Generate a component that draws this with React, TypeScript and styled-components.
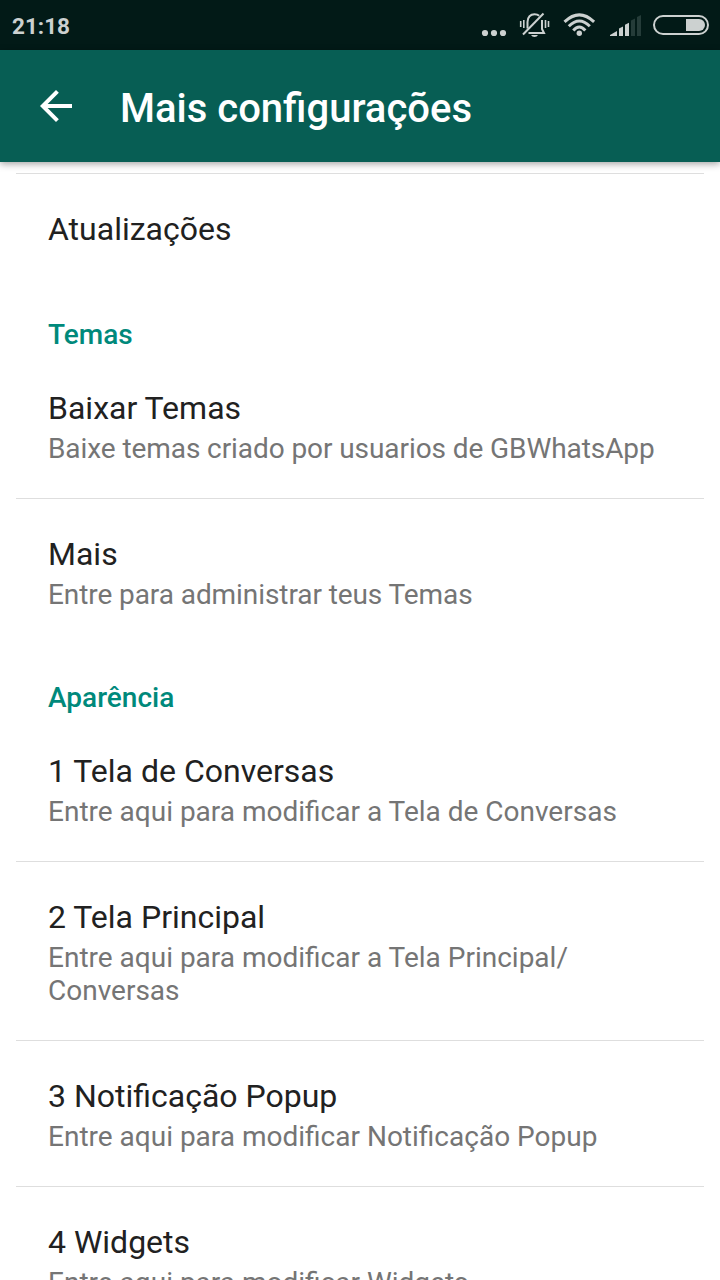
import React from "react";
import styled, { createGlobalStyle } from "styled-components";

const Global = createGlobalStyle`
  *{box-sizing:border-box}
  body{margin:0;background:#fff;font-family:Roboto,sans-serif;overflow:hidden}
`;
const Screen = styled.div`
  width: 720px;
  height: 1280px;
  overflow: hidden;
  background: #fff;
  display: flex;
  flex-direction: column;
`;
const StatusBar = styled.div`
  height: 50px;
  flex: none;
  background: #021a17;
  display: flex;
  align-items: flex-start;
  justify-content: space-between;
  padding-left: 12px;
  color: #ccd1d0;
`;
const Clock = styled.span`
  margin-top: 13px;
  font-size: 22.5px;
  line-height: 26px;
  font-weight: 700;
`;
const StatusIcons = styled.svg`
  display: block;
`;
const AppBar = styled.header`
  height: 112px;
  flex: none;
  background: #075e54;
  display: flex;
  align-items: center;
  padding-left: 32px;
  position: relative;
  box-shadow: 0 2px 7px rgba(0, 0, 0, 0.36);
`;
const Title = styled.h1`
  margin: 6px 0 0 40px;
  font-size: 40px;
  line-height: 48px;
  font-weight: 500;
  color: #fff;
`;
const List = styled.main`
  flex: 1;
  min-height: 0;
  overflow: hidden;
  padding: 11px 16px 0;
`;
const Item = styled.section<{ $divider?: boolean }>`
  border-top: ${p => (p.$divider ? "1px solid #dedede" : "0")};
  padding: ${p => (p.$divider ? "36px" : "38px")} 32px 33px;
`;
const ItemTitle = styled.div`
  font-size: 32px;
  line-height: 38px;
  color: #212121;
  white-space: nowrap;
`;
const Summary = styled.div<{ $tight?: boolean }>`
  margin-top: 5px;
  font-size: 28px;
  line-height: 33px;
  letter-spacing: ${p => (p.$tight ? "-0.08px" : "normal")};
  color: #757575;
  white-space: pre-line;
`;
const Heading = styled.h2`
  margin: 0;
  padding: 37px 32px 0;
  font-size: 28px;
  line-height: 33px;
  font-weight: 500;
  color: #00897b;
`;

export default function App() {
  return (
    <Screen>
      <Global />
      <StatusBar>
        <Clock>21:18</Clock>
        <StatusIcons width="250" height="50" viewBox="470 0 250 50" fill="#ccd1d0">
          <circle cx="485" cy="33" r="3.1" />
          <circle cx="494" cy="33" r="3.1" />
          <circle cx="503" cy="33" r="3.1" />

          <g fill="none" stroke="#ccd1d0" strokeWidth="2">
            <path d="M520.7 21v6M523.8 20v8M545.5 20v8M548.5 21v6" strokeWidth="1.6" />
            <path d="M527.5 28.5V22C527.5 17 530.5 14.2 534.5 14.2C536.5 14.2 538 14.7 539.2 15.8M542 20V29L544 33H528.5" />
            <path d="M523 34.5L543.5 13.5" />
          </g>
          <path d="M531 35h7q-1 2-3.5 2t-3.5-2z" />

          <g fill="none" stroke="#ccd1d0" strokeWidth="3">
            <path d="M564.5 21.8Q579.3 7.8 594.1 21.8" />
            <path d="M568.8 26.2Q579.3 15.8 589.8 26.2" />
            <path d="M573.3 30.5Q579.3 23.5 585.3 30.5" />
          </g>
          <circle cx="579.3" cy="33.2" r="2.7" />

          <path d="M610 36v-1l7-4v5zM619 36v-7.500l4-2v9.500zM625 36V24.800l4-2V36z" />
          <path fill="#253c39" d="M631 36V20.500l4-2V36zM637 36V17l4-2V36z" />

          <rect x="654" y="16" width="54" height="18" rx="9" fill="none" stroke="#ccd1d0" strokeWidth="2" />
          <path d="M686 19h13a6 6 0 0 1 0 12h-13z" />
        </StatusIcons>
      </StatusBar>
      <AppBar>
        <svg width="48" height="48" viewBox="0 0 24 24"><path fill="#fff" d="M20 11H7.83l5.59-5.59L12 4l-8 8 8 8 1.41-1.41L7.83 13H20v-2z" /></svg>
        <Title>Mais configurações</Title>
      </AppBar>
      <List>
        <Item $divider><ItemTitle>Atualizações</ItemTitle></Item>
        <Heading>Temas</Heading>
        <Item><ItemTitle>Baixar Temas</ItemTitle><Summary $tight>Baixe temas criado por usuarios de GBWhatsApp</Summary></Item>
        <Item $divider><ItemTitle>Mais</ItemTitle><Summary $tight>Entre para administrar teus Temas</Summary></Item>
        <Heading>Aparência</Heading>
        <Item><ItemTitle>1 Tela de Conversas</ItemTitle><Summary>Entre aqui para modificar a Tela de Conversas</Summary></Item>
        <Item $divider><ItemTitle>2 Tela Principal</ItemTitle><Summary>{"Entre aqui para modificar a Tela Principal/\nConversas"}</Summary></Item>
        <Item $divider><ItemTitle>3 Notificação Popup</ItemTitle><Summary>Entre aqui para modificar Notificação Popup</Summary></Item>
        <Item $divider><ItemTitle>4 Widgets</ItemTitle><Summary>Entre aqui para modificar Widgets</Summary></Item>
      </List>
    </Screen>
  );
}
